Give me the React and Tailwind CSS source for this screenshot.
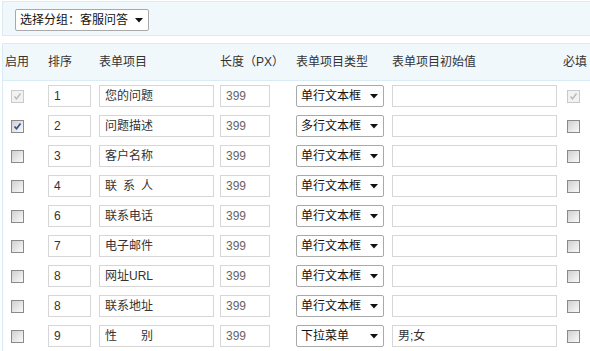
import React from 'react';

const rows = [
  { on: 'locked', sort: '1', name: '您的问题', len: '399', type: '单行文本框', init: '', req: 'locked' },
  { on: 'checked', sort: '2', name: '问题描述', len: '399', type: '多行文本框', init: '', req: 'off' },
  { on: 'off', sort: '3', name: '客户名称', len: '399', type: '单行文本框', init: '', req: 'off' },
  { on: 'off', sort: '4', name: '联\u2002系\u2002人', len: '399', type: '单行文本框', init: '', req: 'off' },
  { on: 'off', sort: '6', name: '联系电话', len: '399', type: '单行文本框', init: '', req: 'off' },
  { on: 'off', sort: '7', name: '电子邮件', len: '399', type: '单行文本框', init: '', req: 'off' },
  { on: 'off', sort: '8', name: '网址URL', len: '399', type: '单行文本框', init: '', req: 'off' },
  { on: 'off', sort: '8', name: '联系地址', len: '399', type: '单行文本框', init: '', req: 'off' },
  { on: 'off', sort: '9', name: '性　　别', len: '399', type: '下拉菜单', init: '男;女', req: 'off' },
];

function Check({ state }) {
  if (state === 'locked') {
    return (
      <span className="flex h-[13px] w-[13px] items-center justify-center border border-[#c9c9c9] bg-[#f2f2f2]">
        <svg width="9" height="9" viewBox="0 0 9 9">
          <path d="M1.5 4.5 L3.5 6.8 L7.5 1.5" fill="none" stroke="#b8b8b8" strokeWidth="1.4" />
        </svg>
      </span>
    );
  }
  return (
    <span className="flex h-[13px] w-[13px] items-center justify-center border border-[#8a8a8a] bg-gradient-to-br from-[#d0d0d0] to-[#fafafa]">
      {state === 'checked' && (
        <svg width="9" height="9" viewBox="0 0 9 9">
          <path d="M1.5 4.5 L3.5 6.8 L7.5 1.5" fill="none" stroke="#2b4a9a" strokeWidth="1.6" />
        </svg>
      )}
    </span>
  );
}

function Box({ w, children, tone = 'text-[#333]' }) {
  return (
    <div className={`flex h-[22px] items-center border border-[#d6d6d6] bg-white pl-[5px] ${tone}`} style={{ width: w }}>
      <span className="whitespace-pre">{children}</span>
    </div>
  );
}

function Select({ w, children }) {
  return (
    <div
      className="flex h-[22px] items-center justify-between rounded-[2px] border border-[#a9a9a9] bg-white pl-[4px] pr-[5px] text-[#111]"
      style={{ width: w }}
    >
      <span>{children}</span>
      <svg width="8" height="5" viewBox="0 0 8 5">
        <path d="M0 0 H8 L4 4.5 Z" fill="#111" />
      </svg>
    </div>
  );
}

export default function App() {
  const cols = 'grid grid-cols-[45px_51px_121px_76px_96px_171px_1fr]';

  return (
    <div className="h-[351px] w-[590px] overflow-hidden bg-white font-['Liberation_Sans','Noto_Sans_CJK_SC',sans-serif] text-[12px]">
      {/* group picker */}
      <div className="ml-[2px] mt-[1px] h-[35px] w-[620px] border border-[#d9ebf5] bg-[#f1f8fc] pl-[12px] pt-[7px]">
        <Select w={134}>选择分组：客服问答</Select>
      </div>

      {/* form items */}
      <div className="ml-[2px] mt-[7px] w-[620px] border-l border-t border-[#d9ebf5]">
        <div className={`${cols} h-[37px] items-center border-b border-[#d9ebf5] bg-[#f1f8fc] text-[#333]`}>
          <span className="pl-[2px]">启用</span>
          <span>排序</span>
          <span>表单项目</span>
          <span>长度（PX）</span>
          <span>表单项目类型</span>
          <span>表单项目初始值</span>
          <span>必填</span>
        </div>

        {rows.map((r, i) => (
          <div key={i} className={`${cols} h-[30px] items-center`}>
            <div className="pl-[8px]">
              <Check state={r.on} />
            </div>
            <Box w={43}>{r.sort}</Box>
            <Box w={115}>{r.name}</Box>
            <Box w={50} tone="text-[#666]">{r.len}</Box>
            <Select w={88}>{r.type}</Select>
            <Box w={165}>{r.init}</Box>
            <div className="pl-[4px]">
              <Check state={r.req} />
            </div>
          </div>
        ))}
      </div>
    </div>
  );
}
